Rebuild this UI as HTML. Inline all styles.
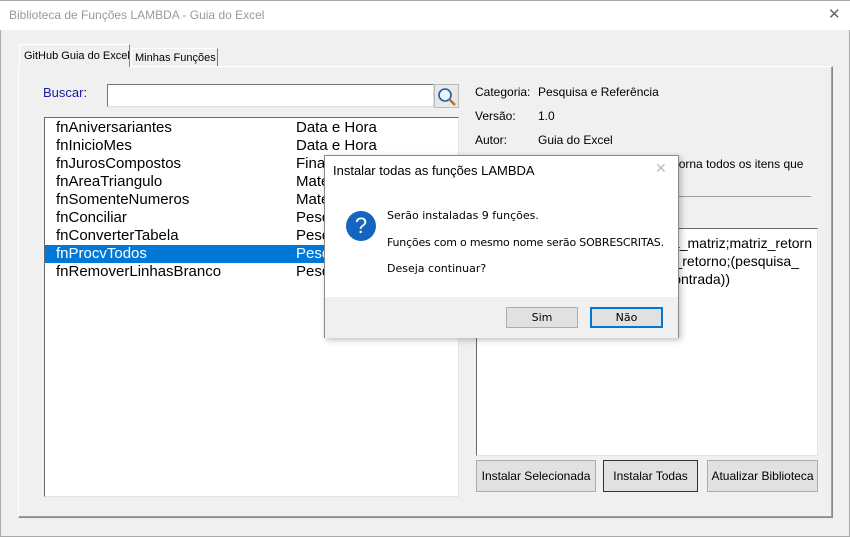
<!DOCTYPE html>
<html><head><meta charset="utf-8"><style>
*{margin:0;padding:0;box-sizing:border-box}
body{width:850px;height:537px;background:#f0f0f0;font-family:"Liberation Sans",sans-serif;position:relative;overflow:hidden;font-size:12px;color:#000}
.a{position:absolute;white-space:nowrap}
.btn{position:absolute;background:#e1e1e1;border:1px solid #adadad;text-align:center;font-size:12px;white-space:nowrap}
.row{position:absolute;left:0;width:414px;height:18px;font-size:15px;line-height:18px}
.row span{position:absolute;left:11px}
.row b{font-weight:normal;position:absolute;left:251px}
.cl{position:absolute;right:0;font-size:14px;white-space:nowrap}
</style></head><body>
<div class="a" style="left:0;top:0;width:850px;height:30px;background:#fff;border-top:1px solid #aaa"></div>
<div class="a" style="left:9px;top:8px;font-size:12px;color:#999">Biblioteca de Funções LAMBDA - Guia do Excel</div>
<div class="a" style="left:828px;top:5px;font-size:15px;color:#666">✕</div>
<div class="a" style="left:0;top:30px;width:850px;height:507px;border-left:1px solid #aaa;border-right:1px solid #aaa;border-bottom:1px solid #aaa"></div>
<div class="a" style="left:18px;top:66px;width:815px;height:452px;border:1px solid #fff;border-right-color:#888;border-bottom-color:#888;box-shadow:inset -1px -1px 0 #a0a0a0"></div>
<div class="a" style="left:19px;top:44px;width:111px;height:23px;border:1px solid #fff;border-right-color:#888;border-bottom:none;background:#f0f0f0;font-size:11px;padding:5px 0 0 4px">GitHub Guia do Excel</div>
<div class="a" style="left:131px;top:48px;width:87px;height:18px;border:1px solid #fff;border-right-color:#777;border-bottom:none;font-size:11px;padding:3px 0 0 3px">Minhas Funções</div>
<div class="a" style="left:43px;top:85px;font-size:13px;color:#1a1aa8">Buscar:</div>
<div class="a" style="left:107px;top:84px;width:327px;height:23px;background:#fff;border:1px solid #777;border-right-color:#ddd;border-bottom-color:#ddd"></div>
<div class="a" style="left:434px;top:84px;width:25px;height:24px;background:#e8e8e8;border:1px solid #bbb">
<svg width="23" height="22"><circle cx="10" cy="10" r="6" fill="#eaf4fc" stroke="#1e5aa8" stroke-width="1.6"/><line x1="14" y1="14" x2="20" y2="20" stroke="#c07020" stroke-width="2.5"/></svg></div>
<div class="a" style="left:44px;top:117px;width:415px;height:380px;background:#fff;border:1px solid #696969;border-right-color:#e3e3e3;border-bottom-color:#e3e3e3;overflow:hidden">
<div class="row" style="top:1px"><span>fnAniversariantes</span><b>Data e Hora</b></div>
<div class="row" style="top:19px"><span>fnInicioMes</span><b>Data e Hora</b></div>
<div class="row" style="top:37px"><span>fnJurosCompostos</span><b>Financeiras</b></div>
<div class="row" style="top:55px"><span>fnAreaTriangulo</span><b>Matemática</b></div>
<div class="row" style="top:73px"><span>fnSomenteNumeros</span><b>Matemática</b></div>
<div class="row" style="top:91px"><span>fnConciliar</span><b>Pesquisa</b></div>
<div class="row" style="top:109px"><span>fnConverterTabela</span><b>Pesquisa</b></div>
<div class="row" style="top:127px;background:#0078d7;color:#fff"><span>fnProcvTodos</span><b>Pesquisa</b></div>
<div class="row" style="top:145px"><span>fnRemoverLinhasBranco</span><b>Pesquisa</b></div>
</div>
<div class="a" style="left:475px;top:85px">Categoria:</div><div class="a" style="left:538px;top:85px">Pesquisa e Referência</div>
<div class="a" style="left:475px;top:109px">Versão:</div><div class="a" style="left:538px;top:109px">1.0</div>
<div class="a" style="left:475px;top:133px">Autor:</div><div class="a" style="left:538px;top:133px">Guia do Excel</div>
<div class="a" style="left:560px;top:157px;width:239px;text-align:right">Procura um valor e retorna todos os itens que</div>
<div class="a" style="left:475px;top:196px;width:336px;height:1px;background:#a0a0a0"></div>
<div class="a" style="left:476px;top:228px;width:342px;height:228px;background:#fff;border:1px solid #696969;border-right-color:#e3e3e3;border-bottom-color:#e3e3e3;overflow:hidden">
<div class="a" style="left:0;top:0;width:335px;height:100px">
<div class="cl" style="top:6px">=LAMBDA(valor;pesquisa_matriz;matriz_retorn</div>
<div class="cl" style="top:24px;right:13px">FILTRO(matriz_retorno;(pesquisa_</div>
<div class="cl" style="top:42px;right:82px">"Não encontrada))</div>
</div></div>
<div class="btn" style="left:476px;top:460px;width:120px;height:32px;line-height:30px">Instalar Selecionada</div>
<div class="btn" style="left:603px;top:460px;width:95px;height:32px;line-height:30px;border:1px solid #333">Instalar Todas</div>
<div class="btn" style="left:707px;top:460px;width:111px;height:32px;line-height:30px">Atualizar Biblioteca</div>
<div class="a" style="left:324px;top:155px;width:355px;height:183px;background:#fff;border:1px solid #888;box-shadow:2px 2px 6px rgba(0,0,0,.25)">
<div class="a" style="left:8px;top:7px;font-size:13px">Instalar todas as funções LAMBDA</div>
<div class="a" style="left:330px;top:4px;font-size:14px;color:#bbb">✕</div>
<div class="a" style="left:21px;top:55px;width:30px;height:30px;border-radius:50%;background:#1565c0;color:#fff;font-size:22px;text-align:center;line-height:30px">?</div>
<div class="a" style="left:62px;top:53px;font-family:'DejaVu Sans',sans-serif;font-size:11px">Serão instaladas 9 funções.</div>
<div class="a" style="left:62px;top:80px;font-family:'DejaVu Sans',sans-serif;font-size:11px;letter-spacing:-0.2px">Funções com o mesmo nome serão SOBRESCRITAS.</div>
<div class="a" style="left:62px;top:106px;font-family:'DejaVu Sans',sans-serif;font-size:11px">Deseja continuar?</div>
<div class="a" style="left:0;top:141px;width:353px;height:41px;background:#f0f0f0"></div>
<div class="btn" style="left:181px;top:151px;width:72px;height:21px;line-height:19px;font-family:'DejaVu Sans',sans-serif;font-size:11px">Sim</div>
<div class="btn" style="left:265px;top:151px;width:73px;height:21px;line-height:17px;border:2px solid #0078d7;font-family:'DejaVu Sans',sans-serif;font-size:11px">Não</div>
</div>
</body></html>
